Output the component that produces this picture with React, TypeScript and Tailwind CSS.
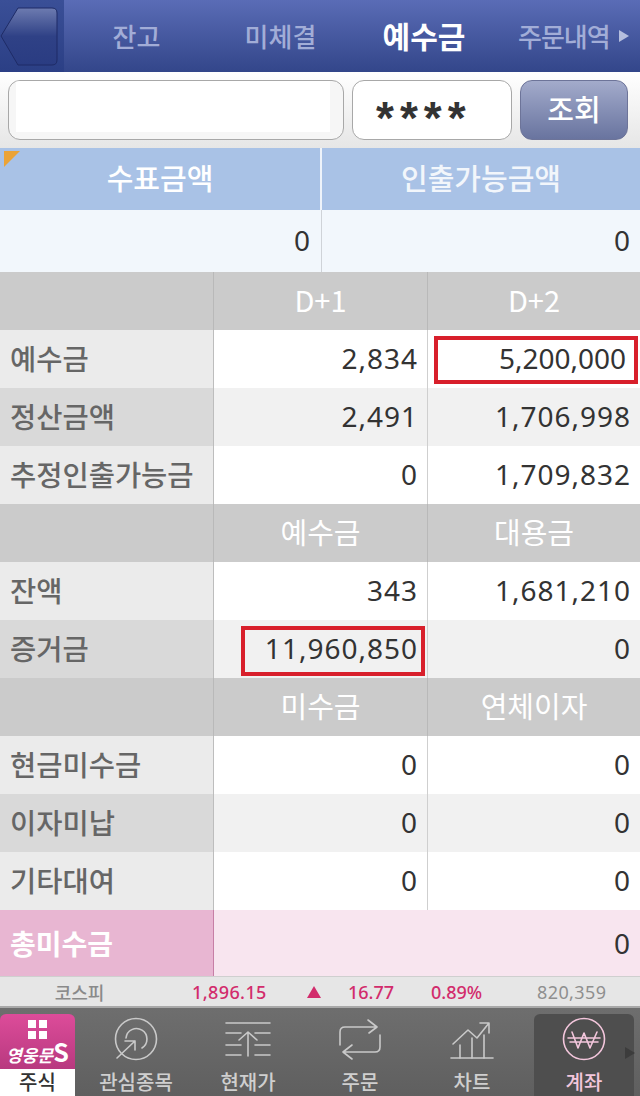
const font = "[font-family:'Noto_Sans_CJK_KR','Noto_Sans',sans-serif]";
const num = "[font-family:'Noto_Sans','Noto_Sans_CJK_KR',sans-serif]";

type Row = { label?: string; a: string; b: string; alt?: boolean; box?: 'a' | 'b' };

const rows: Row[] = [
  { a: 'D+1', b: 'D+2' },
  { label: '예수금', a: '2,834', b: '5,200,000', box: 'b' },
  { label: '정산금액', a: '2,491', b: '1,706,998', alt: true },
  { label: '추정인출가능금', a: '0', b: '1,709,832' },
  { a: '예수금', b: '대용금' },
  { label: '잔액', a: '343', b: '1,681,210' },
  { label: '증거금', a: '11,960,850', b: '0', alt: true, box: 'a' },
  { a: '미수금', b: '연체이자' },
  { label: '현금미수금', a: '0', b: '0' },
  { label: '이자미납', a: '0', b: '0', alt: true },
  { label: '기타대여', a: '0', b: '0' },
];

function Cell({ v, alt, boxed, last }: { v: string; alt?: boolean; boxed?: boolean; last?: boolean }) {
  const bPad = boxed && last;
  return (
    <div className={`relative flex items-center justify-end h-[58px] text-[28px] pb-[2px] text-[#333] ${num} ${bPad ? 'pr-[14px] tracking-[0px]' : 'pr-[9px] tracking-[1px]'} ${alt ? 'bg-[#f1f1f1]' : 'bg-white'} ${last ? '' : 'border-r border-[#cfcfcf]'}`}>
      {boxed && <div className={`absolute top-[6px] border-[4px] border-[#d81f2b] ${last ? 'left-[6px] right-[2px] h-[48px]' : 'left-[27px] right-[2px] h-[50px]'}`} />}
      <span className="relative">{v}</span>
    </div>
  );
}

function TableRow({ r }: { r: Row }) {
  if (!r.label) {
    return (
      <>
        <div className="h-[58px] bg-[#cbcbcb] border-r border-[#b9b9b9]" />
        <div className="h-[58px] bg-[#cbcbcb] border-r border-[#b9b9b9] flex items-center justify-center text-white text-[29px] pb-[2px]">{r.a}</div>
        <div className="h-[58px] bg-[#cbcbcb] flex items-center justify-center text-white text-[29px] pb-[2px]">{r.b}</div>
      </>
    );
  }
  return (
    <>
      <div className={`h-[58px] flex items-center pl-[10px] text-[28.5px] font-medium pb-[2px] text-[#666] border-r border-[#bdbdbd] ${r.alt ? 'bg-[#d9d9d9]' : 'bg-[#ebebeb]'}`}>{r.label}</div>
      <Cell v={r.a} alt={r.alt} boxed={r.box === 'a'} />
      <Cell v={r.b} alt={r.alt} boxed={r.box === 'b'} last />
    </>
  );
}

function TabIcon({ name, color }: { name: string; color: string }) {
  const p = { fill: 'none', stroke: color, strokeWidth: 1.6, strokeLinecap: 'round' as const, strokeLinejoin: 'round' as const };
  return (
    <svg width="48" height="46" viewBox="0 0 48 46" className="block">
      {name === 'watch' && (
        <g {...p}>
          <circle cx="24" cy="23" r="20.5" />
          <path d="M14 22A10.5 10.5 0 1 1 30 32" />
          <path d="M5 42L23 25M13 25H23V34" />
        </g>
      )}
      {name === 'price' && (
        <g {...p}>
          <path d="M2 7H46M2 17H17M31 17H46M2 29H17M31 29H46M2 39H17M31 39H46" />
          <path d="M24 40V17M15 24L24 16L33 24" />
        </g>
      )}
      {name === 'order' && (
        <g {...p}>
          <path d="M32 4L41 11L33 17M41 11H9Q4 11 4 16V29" />
          <path d="M16 29L7 36L16 43M7 36H39Q44 36 44 31V19" />
        </g>
      )}
      {name === 'chart' && (
        <g {...p}>
          <path d="M3 42H45" />
          <path d="M12 42V29M24 42V22M36 42V19" />
          <path d="M5 28L20 14L29 22L41 7M32 7H41V17" />
        </g>
      )}
      {name === 'won' && (
        <g {...p}>
          <circle cx="24" cy="23" r="20.5" />
          <path d="M12 16L18 32L24 17L30 32L37 16M8 22H40M10 26H38" />
        </g>
      )}
    </svg>
  );
}

function Tab({ icon, label, active }: { icon: string; label: string; active?: boolean }) {
  const c = active ? '#f3c6dc' : '#c9c9c9';
  return (
    <div className="w-[112px] flex justify-center">
      <div className={`w-[100px] flex flex-col items-center pt-[2px] rounded-t-[6px] ${active ? 'bg-[#4e4e4e]' : ''}`}>
        <TabIcon name={icon} color={c} />
        <span className={`text-[20px] leading-[28px] mt-[6px] font-medium whitespace-nowrap ${active ? 'text-[#f3c6dc]' : 'text-[#cfcfcf]'}`}>{label}</span>
      </div>
    </div>
  );
}

export default function App() {
  return (
    <div className={`w-[640px] h-[1096px] overflow-hidden flex flex-col bg-white ${font}`}>
      {/* top nav */}
      <div className="h-[72px] shrink-0 flex items-stretch bg-gradient-to-b from-[#5a6cb6] to-[#33468a]">
        <div className="w-[64px] bg-gradient-to-b from-[#3a4f97] to-[#2b3f85]">
          <svg width="64" height="72" viewBox="0 0 64 72" className="block">
            <defs>
              <linearGradient id="bk" x1="0" y1="0" x2="0" y2="1">
                <stop offset="0" stopColor="#6d7bb0" />
                <stop offset="0.5" stopColor="#2f4186" />
                <stop offset="1" stopColor="#2a3c82" />
              </linearGradient>
            </defs>
            <path d="M1 36L18 8H52Q57 8 57 13V60Q57 65 52 65H18Z" fill="url(#bk)" stroke="#1e2b66" strokeWidth="1" />
          </svg>
        </div>
        <div className="flex-1 flex items-center pb-[1px]">
          <span className="w-[145px] text-center text-[#a2add7] font-medium text-[26px]">잔고</span>
          <span className="w-[143px] text-center text-[#a2add7] font-medium text-[26px]">미체결</span>
          <span className="w-[144px] text-center text-white font-bold text-[30px]">예수금</span>
          <span className="ml-[22px] text-[#a2add7] font-medium text-[26px] tracking-[-1px] whitespace-nowrap flex items-center">
            주문내역
            <span className="ml-[9px] w-0 h-0 border-y-[6px] border-y-transparent border-l-[10px] border-l-[#b5bede]" />
          </span>
        </div>
      </div>

      {/* search */}
      <div className="h-[76px] shrink-0 flex items-center pl-[8px] gap-[8px] bg-gradient-to-b from-white to-[#e6e6e6]">
        <div className="w-[336px] h-[60px] rounded-[12px] border border-[#a8a8a8] bg-[#f6f6f6] pl-[7px] overflow-hidden">
          <div className="h-[51px] w-[314px] bg-white" />
        </div>
        <div className="w-[160px] h-[60px] rounded-[12px] border border-[#a8a8a8] bg-white pl-[23px]">
          <span className="block font-['Liberation_Sans'] font-bold text-[46px] leading-[40px] pt-[17px] tracking-[6px] text-[#333]">****</span>
        </div>
        <div className="w-[108px] h-[60px] rounded-[12px] border border-[#6d7499] bg-gradient-to-b from-[#a3abcb] to-[#69749f] flex items-center justify-center text-white text-[29px] font-medium pb-[2px]">조회</div>
      </div>

      {/* summary */}
      <div className="relative grid grid-cols-[322px_318px] shrink-0">
        <div className="absolute left-[4px] top-[3px] w-0 h-0 border-t-[16px] border-t-[#eba336] border-r-[16px] border-r-transparent" />
        <div className="h-[62px] bg-[#a9c2e6] border-r-2 border-[#eef3fa] flex items-center justify-center text-white text-[29px] font-medium pb-[2px]">수표금액</div>
        <div className="h-[62px] bg-[#a9c2e6] flex items-center justify-center text-[#f2f6fb] text-[29px] font-medium pb-[2px]">인출가능금액</div>
        <div className={`h-[62px] bg-[#f2f7fc] border-r border-[#cfd3d8] flex items-center justify-end pr-[11px] pb-[2px] text-[28px] text-[#333] ${num}`}>0</div>
        <div className={`h-[62px] bg-[#f2f7fc] flex items-center justify-end pr-[10px] pb-[2px] text-[28px] text-[#333] ${num}`}>0</div>
      </div>

      {/* table */}
      <div className="grid grid-cols-[214px_214px_212px] shrink-0 border-t border-[#8f8f8f] -mt-[1px]">
        {rows.map((r, i) => (
          <TableRow key={i} r={r} />
        ))}
        <div className="h-[66px] bg-[#e8b6d2] flex items-center pl-[10px] text-[28px] font-bold text-white border-r border-[#c77fa6]">총미수금</div>
        <div className={`col-span-2 h-[66px] bg-[#f8e5ef] flex items-center justify-end pr-[10px] text-[28px] text-[#333] ${num}`}>0</div>
      </div>

      {/* ticker */}
      <div className={`h-[32px] shrink-0 bg-[#e6e6e6] border-t border-[#cfcfcf] border-b-2 border-b-[#a9a9a9] flex items-center text-[18px] font-medium leading-none ${num}`}>
        <span className={`w-[159px] text-center text-[#8a8a8a] ${font}`}>코스피</span>
        <span className="ml-[33px] text-[#d22c6c] w-[90px] tracking-[0.4px]">1,896.15</span>
        <span className="ml-[25px] w-0 h-0 border-x-[7px] border-x-transparent border-b-[12px] border-b-[#d22c6c]" />
        <span className="ml-[27px] text-[#d22c6c] w-[83px]">16.77</span>
        <span className="text-[#d22c6c] w-[106px]">0.89%</span>
        <span className="text-[#8f8f8f] font-normal tracking-[0.4px]">820,359</span>
      </div>

      {/* tabs */}
      <div className="relative flex-1 flex bg-gradient-to-b from-[#6e6e6e] to-[#5f5f5f] pt-[6px]">
        <div className="w-[75px] shrink-0 rounded-t-[6px] overflow-hidden flex flex-col">
          <div className="h-[55px] bg-gradient-to-b from-[#dd4c9a] to-[#b8397f] flex flex-col items-center pt-[6px]">
            <div className="grid grid-cols-2 gap-[3px]">
              <i className="w-[8px] h-[8px] bg-white" /><i className="w-[8px] h-[8px] bg-white" />
              <i className="w-[8px] h-[8px] bg-white" /><i className="w-[8px] h-[8px] bg-white" />
            </div>
            <span className="text-white font-bold text-[17px] italic leading-[24px] whitespace-nowrap">영웅문<span className="text-[25px] not-italic">S</span></span>
          </div>
          <div className="flex-1 bg-white text-center text-[#333] text-[20px] leading-[26px] font-medium">주식</div>
        </div>
        <div className="flex ml-[5px]">
          <Tab icon="watch" label="관심종목" />
          <Tab icon="price" label="현재가" />
          <Tab icon="order" label="주문" />
          <Tab icon="chart" label="차트" />
          <Tab icon="won" label="계좌" active />
        </div>
        <span className="absolute right-[5px] top-[39px] w-0 h-0 border-y-[6px] border-y-transparent border-l-[10px] border-l-[#3c3c3c]" />
      </div>
    </div>
  );
}
